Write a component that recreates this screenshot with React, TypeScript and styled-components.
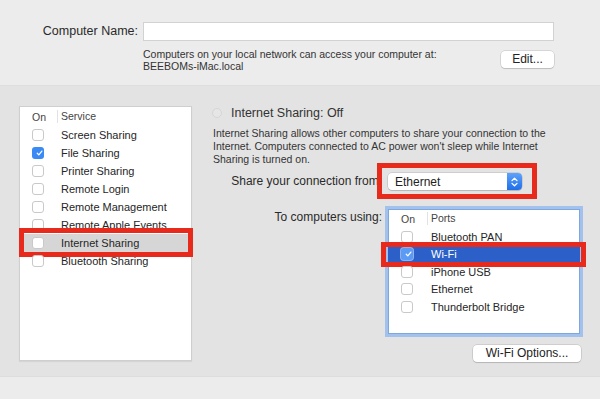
import { FC } from 'react';
import styled, { createGlobalStyle, css } from 'styled-components';

const GlobalStyle = createGlobalStyle`
  html, body {
    margin: 0;
    padding: 0;
  }
  body {
    font-family: "Liberation Sans", Arial, sans-serif;
    color: #262626;
    -webkit-font-smoothing: antialiased;
  }
`;

const services = [
  { name: 'Screen Sharing', on: false },
  { name: 'File Sharing', on: true },
  { name: 'Printer Sharing', on: false },
  { name: 'Remote Login', on: false },
  { name: 'Remote Management', on: false },
  { name: 'Remote Apple Events', on: false },
  { name: 'Internet Sharing', on: false, selected: true },
  { name: 'Bluetooth Sharing', on: false },
];

const ports = [
  { name: 'Bluetooth PAN', on: false },
  { name: 'Wi-Fi', on: true, selected: true },
  { name: 'iPhone USB', on: false },
  { name: 'Ethernet', on: false },
  { name: 'Thunderbolt Bridge', on: false },
];

type Mark = 'service' | 'popup' | 'port';

const CheckBox: FC<{ checked: boolean; inverted?: boolean }> = ({ checked, inverted }) => (
  <Box $checked={checked} $inverted={inverted}>
    {checked && (
      <svg width="12" height="12" viewBox="0 0 12 12">
        <path
          d="M3 6.3 L5.1 8.6 L9.2 3.4"
          fill="none"
          stroke="#fff"
          strokeWidth="1.6"
          strokeLinecap="round"
          strokeLinejoin="round"
        />
      </svg>
    )}
  </Box>
);

export default function App() {
  return (
    <>
      <GlobalStyle />
      <Window>
        <TopSection>
          <NameLabel>Computer Name:</NameLabel>
          <NameInput />
          <span />
          <InfoRow>
            <Info>
              Computers on your local network can access your computer at:
              <br />
              BEEBOMs-iMac.local
            </Info>
            <PushButton $width={53}>Edit...</PushButton>
          </InfoRow>
        </TopSection>

        <Middle>
          <ServiceList>
            <ListHeader $checkWidth={37} $pad={12}>
              <span>On</span>
              <span>Service</span>
            </ListHeader>
            {services.map((s) => (
              <ListRow key={s.name} $checkWidth={37} $pad={12} $height={18} $selected={s.selected}>
                <CheckBox checked={s.on} />
                <span>{s.name}</span>
                {s.selected && <RedBox $mark="service" />}
              </ListRow>
            ))}
          </ServiceList>

          <RightPanel>
            <Status>
              <Radio />
              Internet Sharing: Off
            </Status>
            <Desc>
              Internet Sharing allows other computers to share your connection to the Internet. Computers connected
              to AC power won&apos;t sleep while Internet Sharing is turned on.
            </Desc>

            <Form>
              <FormLabel>Share your connection from:</FormLabel>
              <Popup>
                <span>Ethernet</span>
                <Stepper>
                  <svg width="9" height="12" viewBox="0 0 9 12">
                    <path
                      d="M2 4.6 L4.5 2.2 L7 4.6 M2 7.4 L4.5 9.8 L7 7.4"
                      fill="none"
                      stroke="#fff"
                      strokeWidth="1.3"
                      strokeLinecap="round"
                      strokeLinejoin="round"
                    />
                  </svg>
                </Stepper>
                <RedBox $mark="popup" />
              </Popup>

              <FormLabel $top>To computers using:</FormLabel>
              <PortList>
                <ListHeader $checkWidth={39} $pad={13}>
                  <span>On</span>
                  <span>Ports</span>
                </ListHeader>
                {ports.map((p) => (
                  <ListRow key={p.name} $checkWidth={39} $pad={13} $height={17.5} $active={p.selected}>
                    <CheckBox checked={p.on} inverted={p.selected} />
                    <span>{p.name}</span>
                    {p.selected && <RedBox $mark="port" />}
                  </ListRow>
                ))}
              </PortList>

              <span />
              <ButtonRow>
                <PushButton $width={108}>Wi-Fi Options...</PushButton>
              </ButtonRow>
            </Form>
          </RightPanel>
        </Middle>

        <Bottom />
      </Window>
    </>
  );
}

const Window = styled.div`
  width: 600px;
  height: 399px;
  display: flex;
  flex-direction: column;
  overflow: hidden;
  background: #e3e3e3;
`;

const TopSection = styled.div`
  height: 86px;
  box-sizing: border-box;
  background: #ececec;
  border-bottom: 1px solid #dedede;
  padding: 22px 46px 0 0;
  display: grid;
  grid-template-columns: 138px 1fr;
  column-gap: 5px;
  align-content: start;
`;

const NameLabel = styled.div`
  font-size: 12.5px;
  line-height: 19px;
  text-align: right;
  color: #2a2a2a;
`;

const NameInput = styled.div`
  height: 19px;
  box-sizing: border-box;
  background: #fff;
  border: 1px solid #d2d2d2;
`;

const InfoRow = styled.div`
  display: flex;
  justify-content: space-between;
  align-items: flex-start;
  margin-top: 7px;
`;

const Info = styled.div`
  font-size: 10.5px;
  line-height: 12px;
  color: #333;
`;

const PushButton = styled.div<{ $width: number }>`
  width: ${(p) => p.$width}px;
  height: 17px;
  margin-top: 3px;
  box-sizing: border-box;
  background: #fff;
  border-radius: 4px;
  box-shadow: 0 0 0 0.5px rgba(0, 0, 0, 0.18), 0 1px 1px rgba(0, 0, 0, 0.12);
  font-size: 12px;
  line-height: 17px;
  text-align: center;
  color: #222;
`;

const Middle = styled.div`
  height: 290px;
  box-sizing: border-box;
  display: flex;
  gap: 21px;
  padding: 20px 17px 0 19px;
`;

const ServiceList = styled.div`
  width: 173px;
  height: 255px;
  flex-shrink: 0;
  box-sizing: border-box;
  background: #fff;
  border: 1px solid #cfcfcf;
  box-shadow: 0 1px 1px rgba(0, 0, 0, 0.06);
`;

const ListHeader = styled.div<{ $checkWidth: number; $pad: number }>`
  height: 19px;
  display: grid;
  grid-template-columns: ${(p) => p.$checkWidth}px 1fr;
  align-items: center;
  font-size: 10.5px;
  color: #444;

  & > span:first-child {
    padding-left: ${(p) => p.$pad}px;
  }
  & > span:last-child {
    padding-left: 3px;
    border-left: 1px solid #e2e2e2;
    line-height: 13px;
  }
`;

const ListRow = styled.div<{
  $checkWidth: number;
  $pad: number;
  $height: number;
  $selected?: boolean;
  $active?: boolean;
}>`
  position: relative;
  height: ${(p) => p.$height}px;
  display: grid;
  grid-template-columns: ${(p) => p.$checkWidth - p.$pad + 1}px 1fr;
  align-items: center;
  padding-left: ${(p) => p.$pad}px;
  font-size: 11px;
  background: ${(p) => (p.$active ? '#2d5fc8' : p.$selected ? '#d6d6d6' : 'transparent')};
  color: ${(p) => (p.$active ? '#fff' : '#262626')};

  & > span {
    padding-left: 3px;
  }
`;

const Box = styled.span<{ $checked: boolean; $inverted?: boolean }>`
  width: 12px;
  height: 12px;
  box-sizing: border-box;
  border-radius: 3px;
  display: flex;
  align-items: center;
  justify-content: center;
  background: ${(p) => (p.$checked ? (p.$inverted ? '#5a9bf6' : '#3a8af6') : '#fff')};
  border: ${(p) => (p.$checked ? 'none' : '1px solid #c9c9c9')};
  box-shadow: ${(p) => (p.$inverted ? '0 0 0 1px rgba(255,255,255,0.5)' : 'none')};
`;

const markInsets: Record<Mark, ReturnType<typeof css>> = {
  service: css`
    inset: -6px -2px -5px -1px;
  `,
  popup: css`
    inset: -10px -15px -9px -11px;
  `,
  port: css`
    inset: -4px -6px -4px -7px;
  `,
};

// red annotation frames drawn over the screenshot
const RedBox = styled.div<{ $mark: Mark }>`
  position: absolute;
  border: 5px solid #e82a1c;
  pointer-events: none;
  ${(p) => markInsets[p.$mark]}
`;

const RightPanel = styled.div`
  flex: 1;
  display: flex;
  flex-direction: column;
`;

const Status = styled.div`
  display: flex;
  align-items: center;
  gap: 9px;
  height: 14px;
  font-size: 12.5px;
  color: #333;
`;

const Radio = styled.span`
  width: 10px;
  height: 10px;
  margin-left: -1px;
  border-radius: 50%;
  background: #e6e6e6;
  border: 1px solid #d6d6d6;
  box-sizing: border-box;
`;

const Desc = styled.p`
  margin: 7px 0 0;
  padding-right: 10px;
  font-size: 10.5px;
  line-height: 13px;
  color: #333;
`;

const Form = styled.div`
  margin-top: 7px;
  display: grid;
  grid-template-columns: 169px 1fr;
  column-gap: 3px;
  row-gap: 16px;
`;

const FormLabel = styled.div<{ $top?: boolean }>`
  text-align: right;
  font-size: 12px;
  line-height: 17px;
  color: #2a2a2a;
  align-self: ${(p) => (p.$top ? 'start' : 'center')};
  margin-top: ${(p) => (p.$top ? '3px' : '0')};
`;

const Popup = styled.div`
  position: relative;
  margin-left: 3px;
  width: 134px;
  height: 17px;
  display: flex;
  align-items: center;
  justify-content: space-between;
  background: #fff;
  border-radius: 4px;
  box-shadow: 0 0 0 0.5px rgba(0, 0, 0, 0.18), 0 1px 1px rgba(0, 0, 0, 0.12);
  font-size: 12px;
  color: #222;

  & > span {
    padding-left: 7px;
  }
`;

const Stepper = styled.div`
  width: 15px;
  height: 17px;
  border-radius: 0 4px 4px 0;
  background: linear-gradient(#5fa2fb, #1f6fe9);
  display: flex;
  align-items: center;
  justify-content: center;
`;

const PortList = styled.div`
  width: 198px;
  height: 131px;
  box-sizing: border-box;
  background: #fff;
  border: 3px solid #a2c1ec;
  box-shadow: inset 0 0 0 1px #7ea6df;
`;

const ButtonRow = styled.div`
  width: 198px;
  display: flex;
  justify-content: flex-end;
  margin-top: -11px;
  padding-right: 2px;
  box-sizing: border-box;
`;

const Bottom = styled.div`
  flex: 1;
  background: #ececec;
  border-top: 1px solid #dddddd;
`;
